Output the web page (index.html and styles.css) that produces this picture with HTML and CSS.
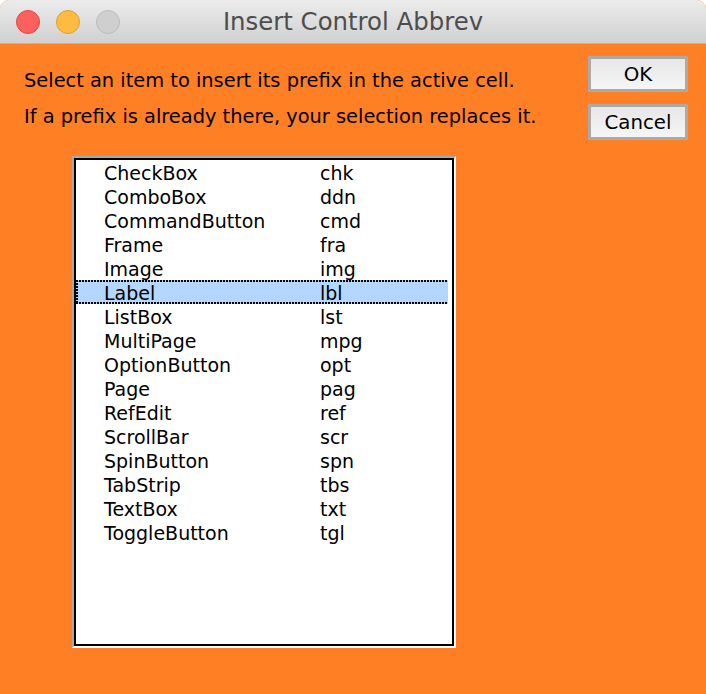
FILE: index.html
```html
<!DOCTYPE html>
<html lang="en">
<head>
    <meta charset="UTF-8">
    <meta name="viewport" content="width=device-width, initial-scale=1.0">
    <title>Insert Control Abbrev</title>
    <link rel="stylesheet" href="styles.css">
</head>
<body>
    <div class="window">
        <div class="titlebar">
            <div class="lights">
                <span class="light light-close"></span>
                <span class="light light-min"></span>
                <span class="light light-zoom"></span>
            </div>
            <div class="title">Insert Control Abbrev</div>
        </div>
        <div class="dialog">
            <div class="top">
                <div class="message">
                    <p>Select an item to insert its prefix in the active cell.</p>
                    <p>If a prefix is already there, your selection replaces it.</p>
                </div>
                <div class="buttons">
                    <button type="button">OK</button>
                    <button type="button">Cancel</button>
                </div>
            </div>
            <div class="listbox">
                <ul class="list">
                    <li class="row"><span class="name">CheckBox</span><span>chk</span></li>
                    <li class="row"><span class="name">ComboBox</span><span>ddn</span></li>
                    <li class="row"><span class="name">CommandButton</span><span>cmd</span></li>
                    <li class="row"><span class="name">Frame</span><span>fra</span></li>
                    <li class="row"><span class="name">Image</span><span>img</span></li>
                    <li class="row selected"><span class="name">Label</span><span>lbl</span></li>
                    <li class="row"><span class="name">ListBox</span><span>lst</span></li>
                    <li class="row"><span class="name">MultiPage</span><span>mpg</span></li>
                    <li class="row"><span class="name">OptionButton</span><span>opt</span></li>
                    <li class="row"><span class="name">Page</span><span>pag</span></li>
                    <li class="row"><span class="name">RefEdit</span><span>ref</span></li>
                    <li class="row"><span class="name">ScrollBar</span><span>scr</span></li>
                    <li class="row"><span class="name">SpinButton</span><span>spn</span></li>
                    <li class="row"><span class="name">TabStrip</span><span>tbs</span></li>
                    <li class="row"><span class="name">TextBox</span><span>txt</span></li>
                    <li class="row"><span class="name">ToggleButton</span><span>tgl</span></li>
                </ul>
            </div>
        </div>
    </div>
</body>
</html>
```

FILE: styles.css
```css
html, body {
    margin: 0;
    padding: 0;
    background-color: #fff;
}
body {
    font-family: "DejaVu Sans", sans-serif;
    color: #000;
}
.window {
    width: 706px;
    height: 694px;
    display: flex;
    flex-direction: column;
    border-radius: 9px 9px 0 0;
    overflow: hidden;
    background-color: #ff7f24;
}
.titlebar {
    height: 43px;
    flex: none;
    display: flex;
    align-items: center;
    justify-content: center;
    position: relative;
    background: linear-gradient(#ececec, #d0d0d0);
    border-bottom: 1px solid #bdb5ae;
}
.lights {
    position: absolute;
    left: 16px;
    top: 10px;
    display: flex;
    gap: 16px;
}
.light {
    width: 22px;
    height: 22px;
    border: 1px solid;
    border-radius: 50%;
}
.light-close {
    background-color: #fc615d;
    border-color: #df4744;
}
.light-min {
    background-color: #fdbc40;
    border-color: #de9f34;
}
.light-zoom {
    background-color: #cfcfcf;
    border-color: #bcbcbc;
}
.title {
    font-size: 24.4px;
    color: #4d4d4d;
}
.dialog {
    flex: 1;
    padding: 12px 18px 0 24px;
}
.top {
    display: flex;
    justify-content: space-between;
}
.message {
    padding-top: 15px;
    font-size: 19.4px;
}
.message p {
    margin: 0 0 16px;
    line-height: 20px;
}
.message p:last-child {
    margin-bottom: 0;
}
.buttons {
    display: flex;
    flex-direction: column;
    gap: 12px;
}
button {
    width: 100px;
    height: 36px;
    padding: 0;
    font-family: inherit;
    font-size: 19.8px;
    color: #000;
    border: 3px solid #aaa;
    background: linear-gradient(#e6e6e6, #f6f6f6);
}
.listbox {
    width: 380px;
    height: 488px;
    box-sizing: content-box;
    margin: 16px 0 0 48px;
    border: 2px solid;
    border-color: #a8a8a8 #fff #fff #a8a8a8;
}
.list {
    list-style: none;
    margin: 0;
    padding: 0 4px 0 0;
    height: 484px;
    border: 2px solid #000;
    background-color: #fff;
}
.row {
    height: 24px;
    box-sizing: border-box;
    display: flex;
    align-items: center;
    padding-left: 28px;
    padding-top: 1px;
    font-size: 19px;
}
.name {
    width: 216px;
}
/* dotted focus lines: top, bottom and left edge */
.selected {
    background-color: #b3d7ff;
    background-image:
        repeating-linear-gradient(90deg, #000 0 2px, transparent 2px 3px),
        repeating-linear-gradient(90deg, #000 0 2px, transparent 2px 3px),
        repeating-linear-gradient(180deg, #000 0 2px, transparent 2px 3px);
    background-size: 100% 2px, 100% 2px, 2px 100%;
    background-position: top left, bottom left, top left;
    background-repeat: no-repeat;
}
```
